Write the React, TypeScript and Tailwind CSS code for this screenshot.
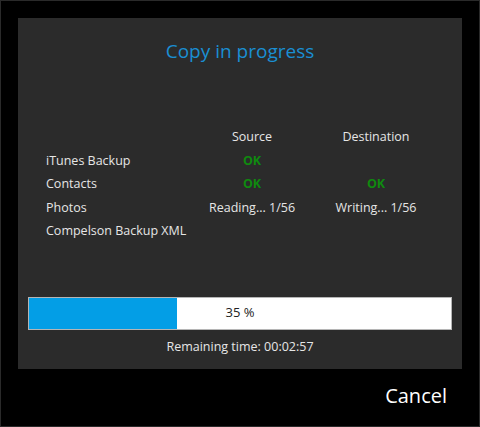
import React from "react";

const rows = [
  { name: "iTunes Backup", source: "OK", dest: "" },
  { name: "Contacts", source: "OK", dest: "OK" },
  { name: "Photos", source: "Reading... 1/56", dest: "Writing... 1/56" },
  { name: "Compelson Backup XML", source: "", dest: "" },
];

const Cell = ({ value }: { value: string }) =>
  value === "OK" ? (
    <span className="font-bold text-[#0f8a0f]">{value}</span>
  ) : (
    <span>{value}</span>
  );

const App = () => {
  const progress = 35;

  return (
    <div
      className="w-[480px] h-[427px] bg-black border border-[#2a2a2a] flex flex-col"
      style={{ fontFamily: '"Open Sans", "Noto Sans", sans-serif' }}
    >
      <div className="shrink-0 mx-[17px] mt-[17px] h-[351px] bg-[#2b2b2b] flex flex-col">
        <h1 className="shrink-0 mt-[19px] h-[28px] leading-[28px] text-center text-[19px] text-[#1a8fd3]">
          Copy in progress
        </h1>

        {/* status table */}
        <div className="shrink-0 mt-[60px] ml-[28px] grid grid-cols-[144px_124px_124px] text-[12.5px] text-[#e6e6e6]">
          <div className="h-[23.5px] leading-[23.5px]" />
          <div className="h-[23.5px] leading-[23.5px] text-center">Source</div>
          <div className="h-[23.5px] leading-[23.5px] text-center">Destination</div>
          {rows.map((row) => (
            <React.Fragment key={row.name}>
              <div className="h-[23.5px] leading-[23.5px] whitespace-nowrap">{row.name}</div>
              <div className="h-[23.5px] leading-[23.5px] text-center whitespace-nowrap">
                <Cell value={row.source} />
              </div>
              <div className="h-[23.5px] leading-[23.5px] text-center whitespace-nowrap">
                <Cell value={row.dest} />
              </div>
            </React.Fragment>
          ))}
        </div>

        {/* progress */}
        <div className="shrink-0 mt-[54px] mx-[10px] h-[33px] relative bg-white border border-[#b5b5b5]">
          <div className="h-full bg-[#039ee6]" style={{ width: `${progress}%` }} />
          <div className="absolute inset-0 flex items-center justify-center text-[13px] text-[#222]">
            {progress} %
          </div>
        </div>
        <div className="shrink-0 mt-[8px] h-[18px] leading-[18px] text-center text-[12.5px] text-[#e6e6e6]">
          Remaining time: 00:02:57
        </div>
      </div>

      <div className="flex justify-end pr-[32px] mt-[12px]">
        <button className="text-[20px] text-white">Cancel</button>
      </div>
    </div>
  );
};

export default App;
